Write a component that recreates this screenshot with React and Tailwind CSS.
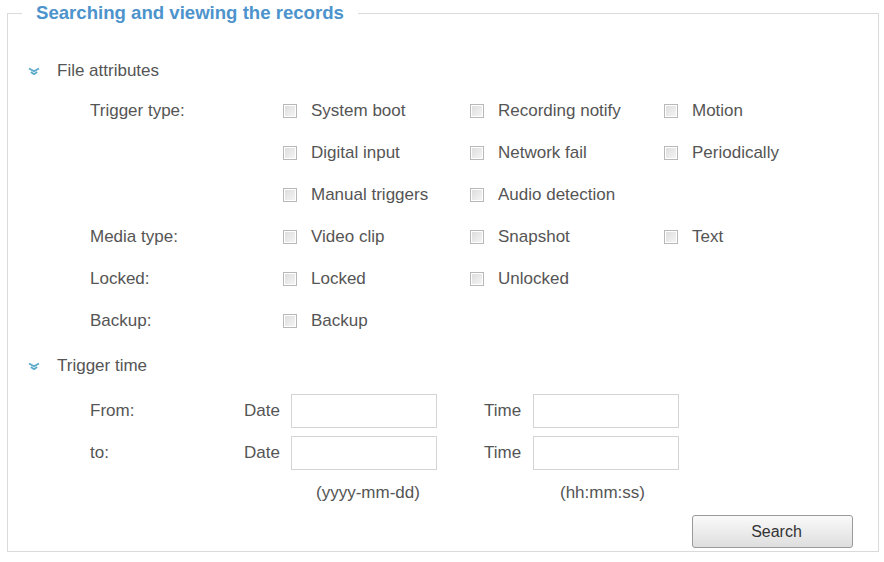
import React from 'react';

const font = { fontFamily: '"Liberation Sans", Arial, sans-serif' };

function Chevron() {
    return (
        <svg width="12" height="9" viewBox="0 0 12 9" className="shrink-0">
            <path d="M1 1.5 L6 4.2 L11 1.5" fill="none" stroke="#5aa9c9" strokeWidth="1.8" />
            <path d="M2.8 5 L6 7.2 L9.2 5" fill="none" stroke="#5aa9c9" strokeWidth="1.8" />
        </svg>
    );
}

function Box({ label }) {
    return (
        <label className="flex items-center">
            <span className="w-[14px] h-[14px] border border-[#b8b8b8] bg-gradient-to-br from-[#dcdcdc] to-[#f6f6f6] shadow-[inset_0_0_0_1px_#fff]" />
            <span className="ml-[14px]">{label}</span>
        </label>
    );
}

const rows = [
    { label: 'Trigger type:', items: ['System boot', 'Recording notify', 'Motion'] },
    { label: '', items: ['Digital input', 'Network fail', 'Periodically'] },
    { label: '', items: ['Manual triggers', 'Audio detection'] },
    { label: 'Media type:', items: ['Video clip', 'Snapshot', 'Text'] },
    { label: 'Locked:', items: ['Locked', 'Unlocked'] },
    { label: 'Backup:', items: ['Backup'] },
];

function Field() {
    return <div className="w-[146px] h-[34px] border border-[#d4d4d4] bg-white" />;
}

export default function App() {
    return (
        <div className="w-[884px] h-[562px] bg-white pt-[3px] text-[17px] text-[#555]" style={font}>
            <fieldset className="ml-[7px] mr-[5px] h-[549px] border border-[#dadada] pl-[14px] pr-[24px] m-0">
                <legend className="px-[14px] text-[18.6px] leading-[20px] font-bold text-[#4d93cc]">
                    Searching and viewing the records
                </legend>

                <div className="flex items-center mt-[38px] h-[20px]">
                    <span className="ml-[6px] mr-[17px]"><Chevron /></span>
                    <span>File attributes</span>
                </div>

                <div className="mt-[9px] pl-[68px]">
                    {rows.map((r, i) => (
                        <div key={i} className="flex items-center h-[42px]">
                            <div className="w-[193px]">{r.label}</div>
                            {r.items.map((it, j) => (
                                <div key={it} className={j === 0 ? 'w-[187px]' : j === 1 ? 'w-[194px]' : ''}>
                                    <Box label={it} />
                                </div>
                            ))}
                        </div>
                    ))}
                </div>

                <div className="flex items-center mt-[14px] h-[20px]">
                    <span className="ml-[6px] mr-[17px]"><Chevron /></span>
                    <span>Trigger time</span>
                </div>

                <div className="mt-[18px] pl-[68px]">
                    {['From:', 'to:'].map(l => (
                        <div key={l} className="flex items-center h-[34px] mb-[8px]">
                            <div className="w-[154px]">{l}</div>
                            <div className="w-[47px]">Date</div>
                            <Field />
                            <div className="w-[49px] ml-[47px]">Time</div>
                            <Field />
                        </div>
                    ))}
                    <div className="flex h-[20px] items-center mt-[13px]">
                        <div className="ml-[226px] w-[244px]">(yyyy-mm-dd)</div>
                        <div>(hh:mm:ss)</div>
                    </div>
                </div>

                <div className="flex justify-end mt-[12px]">
                    <button className="w-[161px] h-[33px] mr-[1px] rounded-[3px] border border-[#9a9a9a] bg-gradient-to-b from-[#fafafa] to-[#dedede] text-[#333] text-[16px] pl-[8px]">
                        Search
                    </button>
                </div>
            </fieldset>
        </div>
    );
}
